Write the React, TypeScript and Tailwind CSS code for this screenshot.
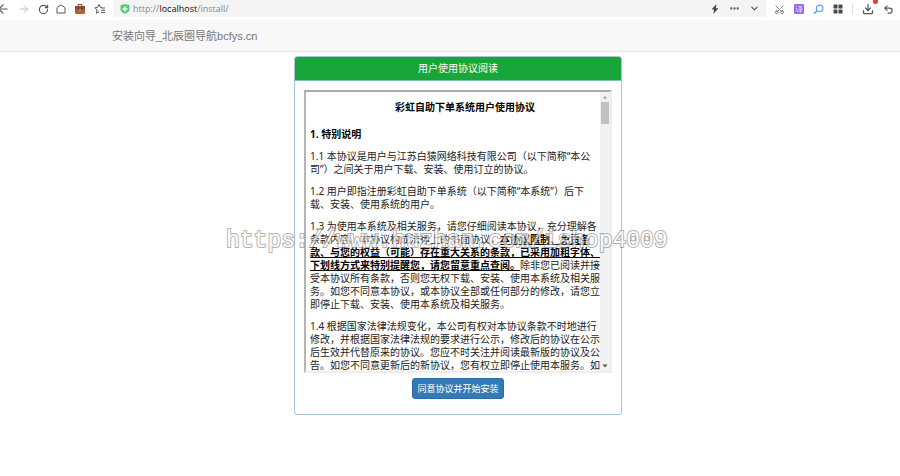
import {
  ArrowLeft,
  ArrowRight,
  ChevronDown,
  Download,
  Ellipsis,
  RotateCw,
  Scissors,
  Undo2,
} from "lucide-react";

const clauses = [
  [
    "1.1 本协议是用户与江苏白猿网络科技有限公司（以下简称“本公",
    "司”）之间关于用户下载、安装、使用订立的协议。",
  ],
  [
    "1.2 用户即指注册彩虹自助下单系统（以下简称“本系统”）后下",
    "载、安装、使用系统的用户。",
  ],
];

const lastClause = [
  "1.4 根据国家法律法规变化，本公司有权对本协议条款不时地进行",
  "修改，并根据国家法律法规的要求进行公示，修改后的协议在公示",
  "后生效并代替原来的协议。您应不时关注并阅读最新版的协议及公",
  "告。如您不同意更新后的新协议，您有权立即停止使用本服务。如",
];

const Lines = ({ lines }: { lines: string[] }) => (
  <p>
    {lines.map((line) => (
      <span key={line} className="block">
        {line}
      </span>
    ))}
  </p>
);

const HomeIcon = () => (
  <svg viewBox="0 0 10 10" className="size-[10px]" fill="none" stroke="#555">
    <path d="M1 9V4Q1 3.500 1.500 3.200L4.500 1.200Q5 .9 5.500 1.200L8.500 3.200Q9 3.500 9 4V9Z" strokeLinejoin="round" />
  </svg>
);

const CaseIcon = () => (
  <svg viewBox="0 0 12 12" className="size-3">
    <path d="M4 3V1.5h4V3" fill="none" stroke="#7a4a35" />
    <rect x="1" y="3" width="10" height="8" rx="1" fill="#b0623f" />
    <path d="M1 4a1 1 0 0 1 1-1h8a1 1 0 0 1 1 1v2L6 7.5 1 6Z" fill="#874a33" />
    <rect x="5.500" y="6" width="1" height="2" fill="#e8b66b" />
  </svg>
);

const StarIcon = () => (
  <svg viewBox="0 0 12 12" className="size-3" fill="none" stroke="#555">
    <path
      d="M8 4.7 6.5 4.4 5 1.5 3.6 4.4 1 4.8l2 2-.5 3.4L5 8.8M7.5 5H11M7 7.200h4M7 9.400h4"
      strokeLinejoin="round"
    />
  </svg>
);

const ShieldIcon = () => (
  <svg viewBox="0 0 10 10" className="size-[10px] shrink-0">
    <path d="M5 0 9.5 1.3v4C9.500 7.600 7.500 9 5 10 2.500 9 .5 7.600.5 5.300v-4Z" fill="#4fcf7c" />
    <path d="M5 2.500v5M2.500 5h5" stroke="#fff" strokeWidth="1.300" />
  </svg>
);

const BoltIcon = () => (
  <svg viewBox="0 0 10 10" className="size-[10px]">
    <path d="M6.500 0 1.500 5.500h2.700L3.200 10 8.500 4.300H5.700Z" fill="#444" />
  </svg>
);

const TranslateIcon = () => (
  <svg viewBox="0 0 10 10" className="size-[10px]">
    <rect width="10" height="10" rx="1" fill="#9a6cf0" />
    <path
      d="M2 2.500h1M1.700 4.500H3v3.300l1-.8M4.500 2.500h3.500L4.700 4.600M5 2.800l3.300 2M4.600 5.500h3.600M4.300 7h4.200M6.400 4.500V9"
      stroke="#e6d8ff"
      strokeWidth=".7"
      fill="none"
    />
  </svg>
);

const SearchIcon = () => (
  <svg viewBox="0 0 12 12" className="size-[11px]" fill="none" stroke="#6ba0ee">
    <circle cx="7.200" cy="4.800" r="3.500" strokeWidth="1.400" />
    <path d="M4.600 7.400 1.200 10.600M1 8.800l2 .2" strokeWidth="1.500" />
  </svg>
);

const GridIcon = () => (
  <svg viewBox="0 0 10 10" className="size-[10px]" fill="#4a4a4a">
    <rect x=".5" y=".5" width="4" height="4" rx=".5" />
    <rect x="5.500" y=".5" width="4" height="4" rx=".5" />
    <rect x=".5" y="5.500" width="4" height="4" rx=".5" />
    <rect x="5.500" y="5.500" width="4" height="4" rx=".5" />
  </svg>
);

const Toolbar = () => (
  <div className="flex h-5 items-start bg-white pr-[6px] text-[#555]">
    <div className="flex h-[18px] w-[114px] shrink-0 items-center justify-between pr-2">
      <button aria-label="Back" className="-ml-1">
        <ArrowLeft size={14} />
      </button>
      <button aria-label="Forward" className="text-[#bbb]">
        <ArrowRight size={12} />
      </button>
      <button aria-label="Reload">
        <RotateCw size={11} strokeWidth={2.5} />
      </button>
      <button aria-label="Home">
        <HomeIcon />
      </button>
      <button aria-label="Workspace">
        <CaseIcon />
      </button>
      <button aria-label="Favorites">
        <StarIcon />
      </button>
    </div>
    <div className="flex h-[17px] grow items-center bg-[#f4f4f4] pr-[6px] pl-[6px]">
      <ShieldIcon />
      <div className="grow pl-[3px] font-['Open_Sans','Noto_Sans',sans-serif] text-[9px] leading-4 text-[#888]">
        http://<span className="text-[#111]">localhost</span>/install/
      </div>
      <div className="flex items-center gap-[9px]">
        <button aria-label="Speed mode">
          <BoltIcon />
        </button>
        <button aria-label="More">
          <Ellipsis size={11} strokeWidth={3} />
        </button>
        <button aria-label="History">
          <ChevronDown size={11} strokeWidth={2.5} />
        </button>
      </div>
    </div>
    <div className="flex h-[18px] items-center gap-[9px] pl-2">
      <button aria-label="Screenshot">
        <Scissors size={11} className="-rotate-90 text-[#777]" />
      </button>
      <button aria-label="Translate">
        <TranslateIcon />
      </button>
      <button aria-label="Search">
        <SearchIcon />
      </button>
      <button aria-label="Apps">
        <GridIcon />
      </button>
      <span className="h-[10px] w-px bg-[#ddd]" />
      <button aria-label="Downloads" className="relative">
        <Download size={12} strokeWidth={2.5} />
        <span className="absolute -top-1 -right-1 size-[5px] rounded-full bg-[#e03a3a]" />
      </button>
      <button aria-label="Restore tab">
        <Undo2 size={11} strokeWidth={2.5} />
      </button>
    </div>
  </div>
);

const Agreement = () => (
  <div className="flex h-[283px] border-2 border-t-[#aaa] border-r-[#eee] border-b-[#eee] border-l-[#b5b5b5]">
    <div className="flex grow flex-col gap-[9px] overflow-hidden pl-[4px] text-[10px] leading-[13px] whitespace-nowrap text-[#222]">
      <h1 className="mt-[9px] mb-[5px] pl-5 text-center font-bold text-black">
        彩虹自助下单系统用户使用协议
      </h1>
      <h2 className="font-bold text-black">1. 特别说明</h2>
      {clauses.map((lines) => (
        <Lines key={lines[0]} lines={lines} />
      ))}
      <p>
        1.3 为使用本系统及相关服务，请您仔细阅读本协议，充分理解各
        <br />
        条款内容。本协议构成法律上的书面协议，
        <b className="text-black underline">
          本协议限制、免责条
          <br />
          款、与您的权益（可能）存在重大关系的条款，已采用加粗字体、
          <br />
          下划线方式来特别提醒您，请您留意重点查阅。
        </b>
        除非您已阅读并接
        <br />
        受本协议所有条款，否则您无权下载、安装、使用本系统及相关服
        <br />
        务。如您不同意本协议，或本协议全部或任何部分的修改，请您立
        <br />
        即停止下载、安装、使用本系统及相关服务。
      </p>
      <Lines lines={lastClause} />
    </div>
    <div className="flex w-[10px] shrink-0 flex-col items-center bg-[#f1f1f1]">
      <svg viewBox="0 0 10 10" className="size-[10px]">
        <path d="M3 6.500h4L5 4Z" fill="#999" />
      </svg>
      <div className="h-[22px] w-2 bg-[#c1c1c1]" />
      <svg viewBox="0 0 10 10" className="mt-auto size-[10px]">
        <path d="M2.500 3.500h5L5 6.500Z" fill="#555" />
      </svg>
    </div>
  </div>
);

const App = () => {
  return (
    <div className="relative min-h-screen overflow-hidden bg-white font-['Noto_Sans','Noto_Sans_CJK_SC',sans-serif]">
      <Toolbar />
      <nav className="flex h-8 items-center border-b border-[#e7e7e7] bg-[#f8f8f8] pl-28">
        <a
          href="#"
          className="font-['Liberation_Sans','Noto_Sans_CJK_SC',sans-serif] text-[11px] leading-4 text-[#777]"
        >
          安装向导_北辰圈导航bcfys.cn
        </a>
      </nav>
      <main className="pt-1 pl-4">
        <div className="mx-auto max-w-[328px] rounded-[3px] border border-[#a9c6d8]">
          <div className="rounded-t-[2px] border-b border-[#7fc4a0] bg-[#18a63a] py-1 text-center text-[10px] leading-[15px] text-white">
            用户使用协议阅读
          </div>
          <div className="px-[9px] pt-[9px] pb-[15px]">
            <Agreement />
            <div className="flex justify-center pt-[5px]">
              <button className="h-[21px] rounded-[3px] border border-[#2e6da4] bg-[#337ab7] px-1 text-[9px] leading-[13px] text-white">
                同意协议并开始安装
              </button>
            </div>
          </div>
        </div>
      </main>
      <div className="pointer-events-none absolute top-[227px] left-[226px] font-['Liberation_Mono',monospace] text-[23px] leading-7 text-white opacity-65 select-none [-webkit-text-stroke:2px_#8a8a8a] [paint-order:stroke]">
        https://www.huzhan.com/ishop4009
      </div>
    </div>
  );
};

export default App;
